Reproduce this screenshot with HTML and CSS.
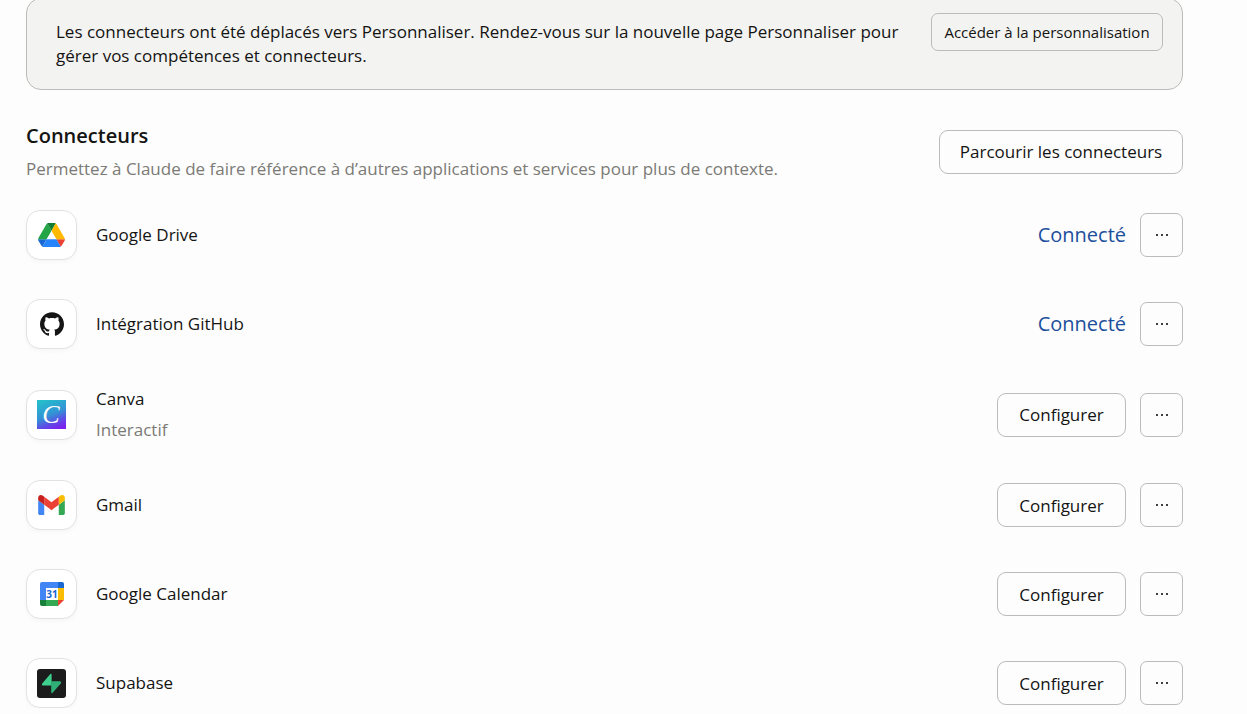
FILE: index.html
```html
<!DOCTYPE html>
<html lang="fr">
<head>
    <meta charset="UTF-8">
    <meta name="viewport" content="width=device-width, initial-scale=1.0">
    <title>Connecteurs</title>
    <link rel="stylesheet" href="styles.css">
</head>
<body>
    <main class="page">
        <section class="banner">
            <p class="banner-text">Les connecteurs ont été déplacés vers Personnaliser. Rendez-vous sur la nouvelle page Personnaliser pour gérer vos compétences et connecteurs.</p>
            <button type="button" class="btn btn-small">Accéder à la personnalisation</button>
        </section>

        <header class="section-header">
            <div>
                <h2>Connecteurs</h2>
                <p class="subtitle">Permettez à Claude de faire référence à d’autres applications et services pour plus de contexte.</p>
            </div>
            <button type="button" class="btn btn-browse">Parcourir les connecteurs</button>
        </header>

        <ul class="connectors">
            <li class="connector">
                <span class="tile">
                    <svg width="27" height="24" viewBox="0 0 87.3 78">
                        <path d="m6.6 66.85 3.85 6.65c.8 1.4 1.95 2.5 3.3 3.3l13.75-23.8h-27.5c0 1.55.4 3.1 1.2 4.5z" fill="#1967d2"/>
                        <path d="m43.65 25-13.75-23.8c-1.35.8-2.5 1.9-3.3 3.3l-25.4 44a9.06 9.06 0 0 0 -1.2 4.5h27.5z" fill="#22a447"/>
                        <path d="m73.55 76.8c1.35-.8 2.5-1.9 3.3-3.3l1.6-2.75 7.65-13.25c.8-1.4 1.2-2.95 1.2-4.5h-27.5l5.85 11.5z" fill="#ea4335"/>
                        <path d="m43.65 25 13.75-23.8c-1.35-.8-2.9-1.2-4.5-1.2h-18.5c-1.6 0-3.15.45-4.5 1.2z" fill="#0f7d33"/>
                        <path d="m59.8 53h-32.3l-13.75 23.8c1.35.8 2.9 1.2 4.5 1.2h50.8c1.6 0 3.15-.45 4.5-1.2z" fill="#2684fc"/>
                        <path d="m73.4 26.5-12.7-22c-.8-1.4-1.95-2.5-3.3-3.3l-13.75 23.8 16.15 28h27.45c0-1.55-.4-3.1-1.2-4.5z" fill="#ffba00"/>
                    </svg>
                </span>
                <span class="name">Google Drive</span>
                <span class="status">Connecté</span>
                <button type="button" class="btn btn-more" aria-label="Options">
                    <svg width="14" height="4" viewBox="0 0 14 4"><circle cx="2" cy="2" r="1"/><circle cx="7" cy="2" r="1"/><circle cx="12" cy="2" r="1"/></svg>
                </button>
            </li>

            <li class="connector">
                <span class="tile">
                    <svg width="24" height="24" viewBox="0 0 24 24">
                        <path fill="#151515" d="M12 .297c-6.63 0-12 5.373-12 12 0 5.303 3.438 9.8 8.205 11.385.6.113.82-.258.82-.577 0-.285-.01-1.04-.015-2.04-3.338.724-4.042-1.61-4.042-1.61C4.422 18.07 3.633 17.7 3.633 17.7c-1.087-.744.084-.729.084-.729 1.205.084 1.838 1.236 1.838 1.236 1.07 1.835 2.809 1.305 3.495.998.108-.776.417-1.305.76-1.605-2.665-.3-5.466-1.332-5.466-5.93 0-1.31.465-2.38 1.235-3.22-.135-.303-.54-1.523.105-3.176 0 0 1.005-.322 3.3 1.23.96-.267 1.98-.399 3-.405 1.02.006 2.04.138 3 .405 2.28-1.552 3.285-1.23 3.285-1.23.645 1.653.24 2.873.12 3.176.765.84 1.23 1.91 1.23 3.22 0 4.61-2.805 5.625-5.475 5.92.42.36.81 1.096.81 2.22 0 1.606-.015 2.896-.015 3.286 0 .315.21.69.825.57C20.565 22.092 24 17.592 24 12.297c0-6.627-5.373-12-12-12"/>
                    </svg>
                </span>
                <span class="name">Intégration GitHub</span>
                <span class="status">Connecté</span>
                <button type="button" class="btn btn-more" aria-label="Options">
                    <svg width="14" height="4" viewBox="0 0 14 4"><circle cx="2" cy="2" r="1"/><circle cx="7" cy="2" r="1"/><circle cx="12" cy="2" r="1"/></svg>
                </button>
            </li>

            <li class="connector">
                <span class="tile">
                    <svg width="29" height="29" viewBox="0 0 29 29">
                        <defs>
                            <linearGradient id="canva" x1="0.3" y1="0" x2="0.7" y2="1">
                                <stop offset="0" stop-color="#25bccb"/>
                                <stop offset="0.5" stop-color="#3491d6"/>
                                <stop offset="0.75" stop-color="#5a51e4"/>
                                <stop offset="1" stop-color="#7b22ef"/>
                            </linearGradient>
                        </defs>
                        <rect width="29" height="29" fill="url(#canva)"/>
                        <text class="canva-letter" x="14" y="23" text-anchor="middle">C</text>
                    </svg>
                </span>
                <span class="name">Canva <small>Interactif</small></span>
                <button type="button" class="btn btn-setup">Configurer</button>
                <button type="button" class="btn btn-more" aria-label="Options">
                    <svg width="14" height="4" viewBox="0 0 14 4"><circle cx="2" cy="2" r="1"/><circle cx="7" cy="2" r="1"/><circle cx="12" cy="2" r="1"/></svg>
                </button>
            </li>

            <li class="connector">
                <span class="tile">
                    <svg width="27" height="20" viewBox="52 42 88 66">
                        <path fill="#4285f4" d="M58 108h14V74L52 59v43c0 3.32 2.69 6 6 6"/>
                        <path fill="#34a853" d="M120 108h14c3.32 0 6-2.69 6-6V59l-20 15"/>
                        <path fill="#fbbc04" d="M120 48v26l20-15v-8c0-7.42-8.47-11.65-14.4-7.2"/>
                        <path fill="#ea4335" d="M72 74V48l24 18 24-18v26L96 92"/>
                        <path fill="#c5221f" d="M52 51v8l20 15V48l-5.6-4.2c-5.94-4.45-14.4-.22-14.4 7.2"/>
                    </svg>
                </span>
                <span class="name">Gmail</span>
                <button type="button" class="btn btn-setup">Configurer</button>
                <button type="button" class="btn btn-more" aria-label="Options">
                    <svg width="14" height="4" viewBox="0 0 14 4"><circle cx="2" cy="2" r="1"/><circle cx="7" cy="2" r="1"/><circle cx="12" cy="2" r="1"/></svg>
                </button>
            </li>

            <li class="connector">
                <span class="tile">
                    <svg width="24" height="24" viewBox="0 0 24 24">
                        <path fill="#4285f4" d="M2 0h17v6H6v12H0V2a2 2 0 0 1 2-2z"/>
                        <path fill="#1967d2" d="M18 0h4a2 2 0 0 1 2 2v4h-6z"/>
                        <path fill="#fbbc04" d="M18 6h6v12h-6z"/>
                        <path fill="#34a853" d="M5 18h13v6H5z"/>
                        <path fill="#188038" d="M0 18h6v6H2a2 2 0 0 1-2-2z"/>
                        <path fill="#ea4335" d="M18 18h6l-6 6z"/>
                        <path fill="#fff" d="M6 6h12v12H6z"/>
                        <text class="calendar-day" x="12" y="16" text-anchor="middle">31</text>
                    </svg>
                </span>
                <span class="name">Google Calendar</span>
                <button type="button" class="btn btn-setup">Configurer</button>
                <button type="button" class="btn btn-more" aria-label="Options">
                    <svg width="14" height="4" viewBox="0 0 14 4"><circle cx="2" cy="2" r="1"/><circle cx="7" cy="2" r="1"/><circle cx="12" cy="2" r="1"/></svg>
                </button>
            </li>

            <li class="connector">
                <span class="tile">
                    <svg width="29" height="29" viewBox="0 0 29 29">
                        <rect width="29" height="29" rx="3" fill="#1c1c1c"/>
                        <path fill="#3ecf8e" d="M14.6 5.4v11.2H6.3c-1.2 0-1.8-1.2-1.1-2.1l8.2-9.4c.5-.6 1.2-.3 1.2.3z"/>
                        <path fill="#2fae77" d="M14.2 23.6V12.3h8.5c1.2 0 1.8 1.2 1.1 2.1l-8.4 9.5c-.5.6-1.2.3-1.2-.3z"/>
                    </svg>
                </span>
                <span class="name">Supabase</span>
                <button type="button" class="btn btn-setup">Configurer</button>
                <button type="button" class="btn btn-more" aria-label="Options">
                    <svg width="14" height="4" viewBox="0 0 14 4"><circle cx="2" cy="2" r="1"/><circle cx="7" cy="2" r="1"/><circle cx="12" cy="2" r="1"/></svg>
                </button>
            </li>
        </ul>
    </main>
</body>
</html>
```
FILE: styles.css
```css
* {
    margin: 0;
    padding: 0;
    box-sizing: border-box;
}

body {
    background: #fdfdfd;
    color: #141413;
    font-family: 'Open Sans', 'Noto Sans', sans-serif;
    font-size: 17px;
    line-height: 24px;
    overflow: hidden;
}

.page {
    padding: 0 64px 0 26px;
}

/* the top edge is scrolled just out of view */
.banner {
    display: flex;
    align-items: flex-start;
    justify-content: space-between;
    gap: 24px;
    margin-top: -2px;
    padding: 14px 19px 21px 29px;
    background: #f3f3f1;
    border: 1px solid #bbbbb9;
    border-radius: 15px;
}

.banner-text {
    padding-top: 7px;
}

.btn {
    flex-shrink: 0;
    height: 44px;
    background: transparent;
    border: 1px solid #bbbbb9;
    border-radius: 9px;
    color: #141413;
    font-family: inherit;
    font-size: 17px;
    font-weight: 500;
    cursor: pointer;
}

.btn:hover {
    background: #f3f3f1;
}

.btn-small {
    width: 232px;
    height: 38px;
    border-radius: 7px;
    font-size: 15px;
}

.btn-browse {
    width: 244px;
}

.btn-setup {
    width: 129px;
}

.btn-more {
    display: flex;
    align-items: center;
    justify-content: center;
    width: 43px;
    border-radius: 7px;
}

.section-header {
    display: flex;
    align-items: center;
    justify-content: space-between;
    margin-top: 32px;
}

h2 {
    font-size: 20px;
    font-weight: 600;
    line-height: 28px;
}

.subtitle {
    margin-top: 7px;
    color: #7b7a75;
}

.connectors {
    display: flex;
    flex-direction: column;
    gap: 39px;
    margin-top: 29px;
    list-style: none;
}

.connector {
    display: flex;
    align-items: center;
    gap: 14px;
}

.tile {
    display: flex;
    align-items: center;
    justify-content: center;
    width: 51px;
    height: 50px;
    background: #fff;
    border: 1px solid #e2e2e0;
    border-radius: 14px;
    box-shadow: 0 2px 4px rgba(0, 0, 0, 0.03);
}

.name {
    flex: 1;
    padding-left: 5px;
    line-height: 22px;
}

.name small {
    display: block;
    margin-top: 9px;
    color: #7b7a75;
    font-size: 17px;
}

.status {
    color: #1c4f9c;
    font-size: 20px;
}

.canva-letter {
    fill: #fff;
    font-family: 'Liberation Serif', serif;
    font-size: 26px;
    font-style: italic;
}

.calendar-day {
    fill: #1967d2;
    font-size: 10px;
    font-weight: 700;
}
```
